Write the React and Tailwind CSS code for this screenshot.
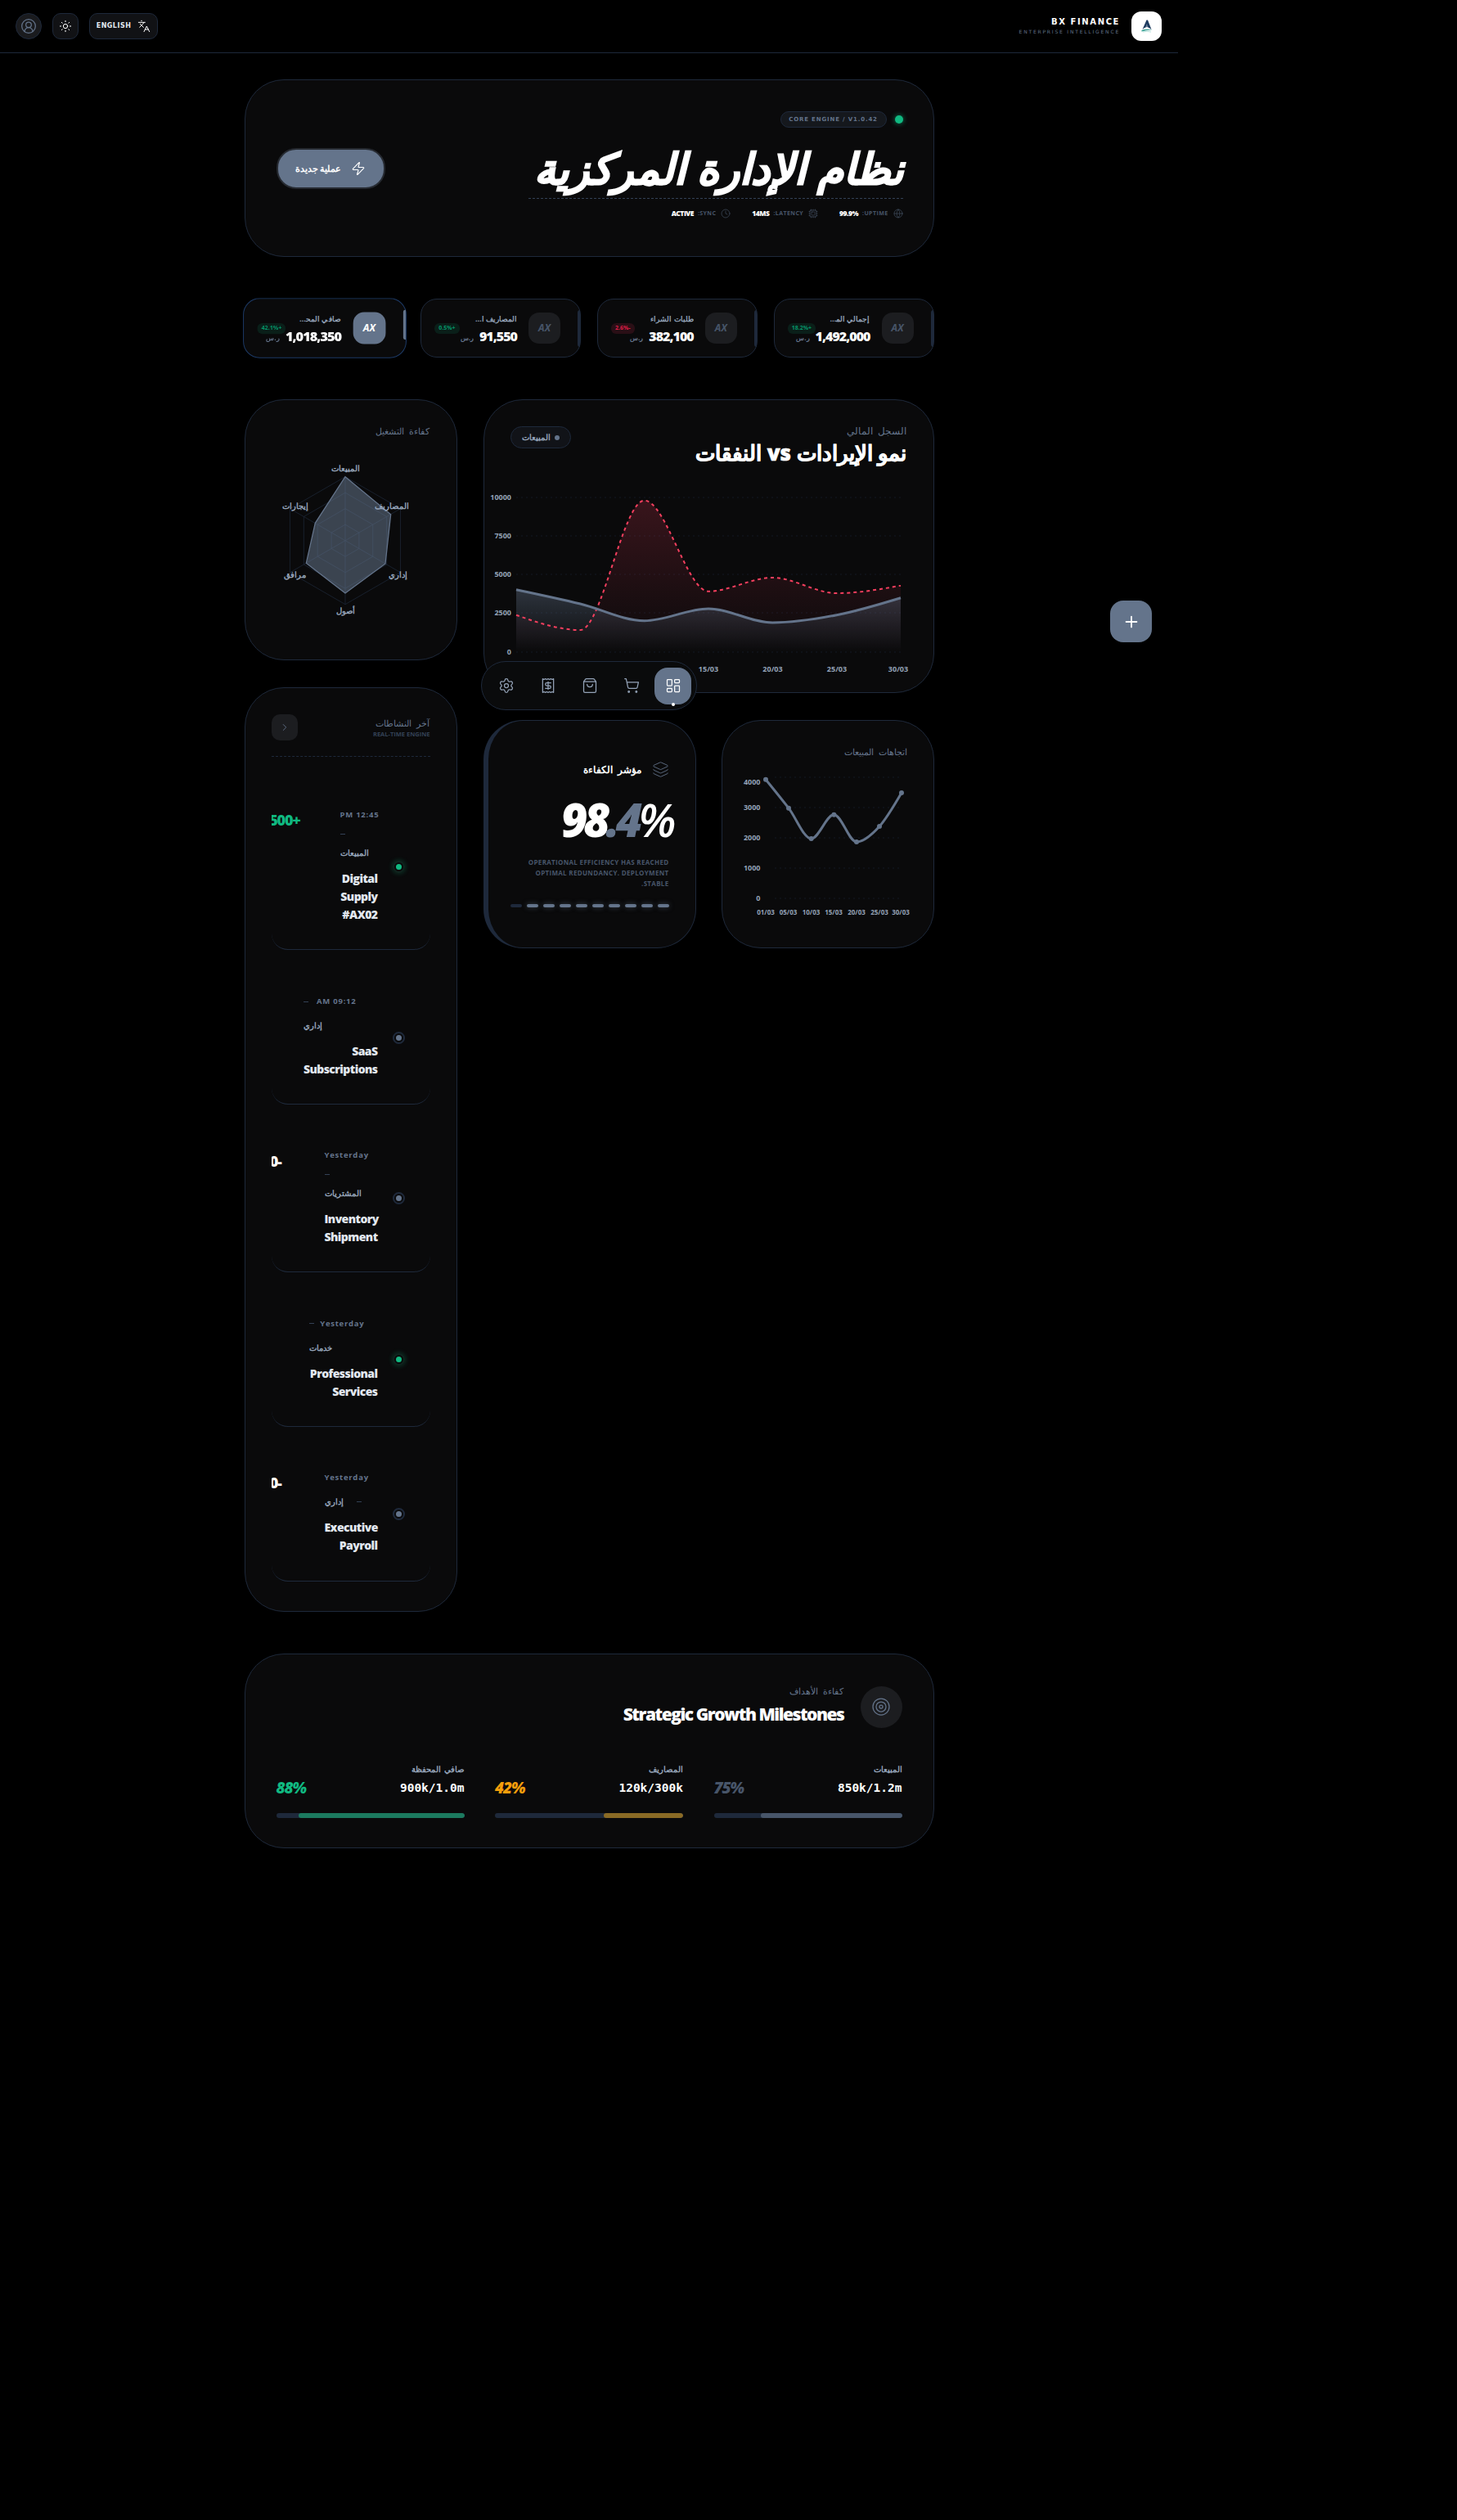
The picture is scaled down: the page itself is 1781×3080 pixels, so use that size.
import React from "react";
import { CircleUserRound, Sun, Languages, Zap, Globe, Cpu, Clock, ChevronRight, Layers, Target, Settings, Receipt, ShoppingBag, ShoppingCart, LayoutDashboard, Plus } from "lucide-react";

function mono(pts) {
  const sign = (v) => (v < 0 ? -1 : 1);
  const n = pts.length;
  const t = new Array(n).fill(0);
  for (let i = 1; i < n - 1; i++) {
    const [x0, y0] = pts[i - 1], [x1, y1] = pts[i], [x2, y2] = pts[i + 1];
    const h0 = x1 - x0, h1 = x2 - x1, s0 = (y1 - y0) / h0, s1 = (y2 - y1) / h1;
    const p = (s0 * h1 + s1 * h0) / (h0 + h1);
    t[i] = (sign(s0) + sign(s1)) * Math.min(Math.abs(s0), Math.abs(s1), 0.5 * Math.abs(p)) || 0;
  }
  t[0] = (3 * (pts[1][1] - pts[0][1]) / (pts[1][0] - pts[0][0]) - t[1]) / 2;
  t[n - 1] = (3 * (pts[n - 1][1] - pts[n - 2][1]) / (pts[n - 1][0] - pts[n - 2][0]) - t[n - 2]) / 2;
  let d = `M${pts[0][0]},${pts[0][1]}`;
  for (let i = 0; i < n - 1; i++) {
    const [x0, y0] = pts[i], [x1, y1] = pts[i + 1];
    const dx = (x1 - x0) / 3;
    d += `C${x0 + dx},${y0 + dx * t[i]},${x1 - dx},${y1 - dx * t[i + 1]},${x1},${y1}`;
  }
  return d;
}

const KPIS = [
  { l: "إجمالي المبيعات", v: "1,492,000", p: "+18.2%", red: false },
  { l: "طلبات الشراء", v: "382,100", p: "-2.6%", red: true },
  { l: "المصاريف الجارية", v: "91,550", p: "+0.5%", red: false },
  { l: "صافي المحفظة", v: "1,018,350", p: "+42.1%", red: false, active: true },
];

function Kpi({ k }) {
  return (
    <div className={"relative flex h-[72px] flex-1 items-center rounded-[20px] border bg-[#0a0a0b] pr-[24px] " + (k.active ? "scale-[1.02] border-[#1d3a66]" : "border-[#1e293b]")}>
      <span className={"absolute top-[13px] right-0 w-[3px] rounded-l " + (k.active ? "h-[36px] bg-[#64748b]" : "h-[45px] bg-[#1e293b]")}></span>
      <div className={"flex h-[38px] w-[39px] shrink-0 items-center justify-center rounded-[13px] text-[12px] font-bold italic " + (k.active ? "bg-[#64748b] text-white" : "bg-[#1c1d20] text-[#475569]")}>AX</div>
      <div className="mr-[14px] flex flex-col">
        <span className={"truncate text-[9px] leading-[14px] font-bold text-[#94a3b8] " + (k.l === "طلبات الشراء" ? "w-[60px]" : "w-[52px]")}>{k.l}</span>
        <div className="mt-[5px] flex items-center gap-[7px]">
          <span className="text-[16px] leading-[18px] font-extrabold tracking-[-0.06em] whitespace-nowrap text-white">{k.v}</span>
          <span className="mt-[4px] text-[8px] leading-[10px] font-bold whitespace-nowrap text-[#64748b]">ر.س</span>
        </div>
      </div>
      <span className={"absolute top-[29px] left-[16px] flex h-[13px] items-center rounded-[6px] px-[5px] text-[7px] font-bold " + (k.red ? "bg-[#2a0f16] text-[#e11d48]" : "bg-[#0a1f19] text-[#059669]")}>{k.p}</span>
    </div>
  );
}

function Stat({ icon: Icon, label, value }) {
  return (
    <div className="flex items-center">
      <Icon size={12} strokeWidth={1.25} className="text-[#475569]" />
      <span className="mr-[6px] text-[7px] font-bold tracking-[0.06em] text-[#475569]">{label}:</span>
      <span className="mr-[5px] text-[8.5px] font-extrabold tracking-[-0.06em] text-white">{value}</span>
    </div>
  );
}

function Radar() {
  const cx = 421, cy = 660.7;
  const ang = [-90, -30, 30, 90, 150, 210].map((a) => (a * Math.PI) / 180);
  const hex = (r) => ang.map((a) => `${cx + r * Math.cos(a)},${cy + r * Math.sin(a)}`).join(" ");
  const labels = [
    ["المبيعات", 421, 576],
    ["المصاريف", 478, 622],
    ["إداري", 485, 706],
    ["أصول", 421, 750],
    ["مرافق", 359, 706],
    ["إيجارات", 360, 622],
  ];
  return (
    <svg viewBox="331 560 194 200" width="194" height="200" className="mt-[27px] block overflow-visible">
      {[19.5, 39, 58.5, 78].map((r) => (
        <polygon key={r} points={hex(r)} fill="none" stroke="#1e293b" strokeOpacity="0.7" />
      ))}
      {ang.map((a, i) => (
        <line key={i} x1={cx} y1={cy} x2={cx + 78 * Math.cos(a)} y2={cy + 78 * Math.sin(a)} stroke="#1e293b" strokeOpacity="0.7" />
      ))}
      <polygon points="421,582.7 476.7,628.7 470,689 421,725 373.3,688.3 384.3,639.3" fill="#64748b" fillOpacity="0.55" stroke="#64748b" strokeWidth="1.25" />
      {labels.map(([t, x, y]) => (
        <text key={t} x={x} y={y} textAnchor="middle" className="fill-[#94a3b8] text-[10px] font-semibold">{t}</text>
      ))}
    </svg>
  );
}

function MainChart() {
  const xs = [631, 709.3, 787.7, 866, 944.3, 1022.7, 1101];
  const blue = mono(xs.map((x, i) => [x, [720.7, 738, 758.7, 744, 761, 751.7, 730.7][i]]));
  const red = mono(xs.map((x, i) => [x, [751.7, 770, 611.7, 722.7, 706, 725, 715.7][i]]));
  const close = "L1101,797L631,797Z";
  return (
    <svg dir="ltr" viewBox="623 590 486 240" width="486" height="240" className="mt-[18px] block overflow-visible">
      <defs>
        <linearGradient id="mainRed" x1="0" y1="0" x2="0" y2="1">
          <stop offset="0" stopColor="#f43f5e" stopOpacity="0.2" />
          <stop offset="1" stopColor="#f43f5e" stopOpacity="0" />
        </linearGradient>
        <linearGradient id="mainBlue" x1="0" y1="0" x2="0" y2="1">
          <stop offset="0" stopColor="#64748b" stopOpacity="0.4" />
          <stop offset="1" stopColor="#64748b" stopOpacity="0" />
        </linearGradient>
      </defs>
      {[608, 655, 702, 749, 797].map((y) => (
        <line key={y} x1="631" x2="1101" y1={y} y2={y} stroke="#1e293b" strokeOpacity="0.5" strokeDasharray="2 4" />
      ))}
      <path d={red + close} fill="url(#mainRed)" />
      <path d={blue + close} fill="url(#mainBlue)" />
      <path d={red} fill="none" stroke="#f43f5e" strokeWidth="2" strokeDasharray="4 4" />
      <path d={blue} fill="none" stroke="#64748b" strokeWidth="3" />
      {[["10000", 611], ["7500", 658], ["5000", 705], ["2500", 752], ["0", 800]].map(([t, y]) => (
        <text key={t} x="625" y={y} className="fill-[#94a3b8] text-[9px] font-bold">{t}</text>
      ))}
      {[["01/03", 631], ["05/03", 709], ["10/03", 787], ["15/03", 866], ["20/03", 944.5], ["25/03", 1023], ["30/03", 1098]].map(([t, x]) => (
        <text key={t} x={x} y="821" textAnchor="middle" className="fill-[#94a3b8] text-[9px] font-bold">{t}</text>
      ))}
    </svg>
  );
}

function TrendChart() {
  const pts = [[935, 952.7], [963, 987.7], [990.7, 1025], [1018.4, 995.7], [1046, 1029], [1074, 1010], [1101, 969]];
  return (
    <svg dir="ltr" viewBox="915 930 194 195" width="194" height="195" className="mt-[5px] block overflow-visible">
      {[950, 987, 1024, 1061, 1098].map((y) => (
        <line key={y} x1="946" x2="1101" y1={y} y2={y} stroke="#1e293b" strokeOpacity="0.5" strokeDasharray="2 4" />
      ))}
      <path d={mono(pts)} fill="none" stroke="#64748b" strokeWidth="3" />
      {pts.map(([x, y]) => (
        <circle key={x} cx={x} cy={y} r="3" fill="#64748b" />
      ))}
      {[["4000", 959], ["3000", 990], ["2000", 1027], ["1000", 1064], ["0", 1101]].map(([t, y]) => (
        <text key={t} x="928.5" y={y} className="fill-[#94a3b8] text-[9px] font-bold">{t}</text>
      ))}
      {[["01/03", 935], ["05/03", 962.5], ["10/03", 990.5], ["15/03", 1018], ["20/03", 1046], ["25/03", 1074], ["30/03", 1100]].map(([t, x]) => (
        <text key={t} x={x} y="1118" textAnchor="middle" className="fill-[#94a3b8] text-[8px] font-bold">{t}</text>
      ))}
    </svg>
  );
}

const Dash = () => <span className="block h-[1px] w-[6px] bg-[#334155]"></span>;
const Time = ({ t }) => <span dir="ltr" className="block text-[9.5px] leading-[12px] font-bold tracking-[0.08em] whitespace-nowrap text-[#64748b]">{t}</span>;
const Lab = ({ t }) => <span className="block text-[10px] leading-[14px] font-bold whitespace-nowrap text-[#94a3b8]">{t}</span>;

const ROWS = [
  { cls: "mt-[33px] h-[203px]", w: "w-[46px]", green: true, title: ["Digital", "Supply", "#AX02"],
    amount: "+12,500", amtCls: "text-[#10b981] mr-[49px]",
    meta: (<><Time t="PM 12:45" /><div className="mt-[17px] flex h-[2px] items-center"><Dash /></div><div className="mt-[14px]"><Lab t="المبيعات" /></div></>) },
  { cls: "mt-[26px] h-[163px]", w: "w-[91px]", title: ["SaaS", "Subscriptions"],
    meta: (<><div className="flex h-[12px] w-[65px] items-center justify-between"><Dash /><Time t="AM 09:12" /></div><div className="mt-[16px]"><Lab t="إداري" /></div></>) },
  { cls: "mt-[25px] h-[180px]", w: "w-[65px]", title: ["Inventory", "Shipment"],
    amount: "-45,000", amtCls: "text-white mr-[53px]",
    meta: (<><Time t="Yesterday" /><div className="mt-[16px] flex h-[2px] items-center"><Dash /></div><div className="mt-[15px]"><Lab t="المشتريات" /></div></>) },
  { cls: "mt-[25px] h-[164px]", w: "w-[84px]", title: ["Professional", "Services"], green: true,
    meta: (<><div className="flex h-[12px] w-[68px] items-center justify-between"><Dash /><Time t="Yesterday" /></div><div className="mt-[16px]"><Lab t="خدمات" /></div></>) },
  { cls: "mt-[24px] h-[165px]", w: "w-[65px]", title: ["Executive", "Payroll"],
    amount: "-80,000", amtCls: "text-white mr-[53px]",
    meta: (<><Time t="Yesterday" /><div className="mt-[16px] flex h-[14px] w-[45px] items-center justify-between"><Lab t="إداري" /><Dash /></div></>) },
];

function Row({ r }) {
  return (
    <div className={"flex items-center overflow-hidden rounded-[20px] border-b border-[#1e293b] pr-[31px] " + r.cls}>
      <span className={"flex h-[15px] w-[15px] shrink-0 items-center justify-center rounded-full border-2 " + (r.green ? "border-[#10251f] shadow-[0_0_6px_#10b98155]" : "border-[#1e293b]")}>
        <span className={"h-[7px] w-[7px] shrink-0 rounded-full " + (r.green ? "bg-[#10b981]" : "bg-[#64748b]")}></span>
      </span>
      <div className={"mr-[18px] flex shrink-0 flex-col " + r.w}>
        <div dir="ltr" className="flex flex-col items-start">{r.meta}</div>
        <div className="mt-[14px] text-[14px] leading-[22px] font-extrabold tracking-[-0.04em] whitespace-nowrap text-[#e2e8f0]">
          {r.title.map((t) => (<div key={t} dir="ltr" className="text-right">{t}</div>))}
        </div>
      </div>
      {r.amount && (
        <span className={"mt-[32px] shrink-0 self-start text-[18px] leading-[24px] font-extrabold tracking-[-0.07em] whitespace-nowrap " + r.amtCls}>{r.amount}</span>
      )}
    </div>
  );
}

function Goal({ label, value, pct, pctCls, fill, w }) {
  return (
    <div className="flex w-[230px] flex-col">
      <span className="text-[10px] leading-[14px] font-bold text-[#94a3b8] [word-spacing:0.2em]">{label}</span>
      <div className="mt-[6px] flex items-center justify-between">
        <span className="font-['DejaVu_Sans_Mono',monospace] text-[14.5px] leading-[20px] font-bold whitespace-nowrap text-white">{value}</span>
        <span className={"text-[19px] leading-[20px] font-extrabold italic tracking-[-0.06em] " + pctCls}>{pct}</span>
      </div>
      <div className="mt-[21px] h-[6px] w-full overflow-hidden rounded-full bg-[#1e293b]">
        <div className={"h-full rounded-full " + fill + " " + w}></div>
      </div>
    </div>
  );
}

const CARD = "rounded-[48px] border border-[#1e293b] bg-[#0a0a0b]";

export default function App() {
  return (
    <div className="min-h-[3080px] w-full bg-black">
      <div dir="rtl" className="relative w-[1440px] font-['Open_Sans',sans-serif] text-white">
        <header className="flex h-[65px] items-center justify-between border-b border-[#1e293b] pr-[20px] pl-[19px]">
          <div className="flex items-center gap-[14px]">
            <div className="flex h-[36px] w-[37px] items-center justify-center rounded-[12px] bg-white">
              <svg viewBox="0 0 14 16" width="14" height="16">
                <path d="M6.5 0.5 L8 0.5 L12.5 12 L9.5 10 L7 9 L4 10 L1.5 12 Z" fill="#1e3a5f" />
                <path d="M6.8 5 L8.6 10 L5.2 10 Z" fill="#fff" fillOpacity="0.35" />
                <path d="M0.5 13 Q7 10.5 13.5 13 Q7 12.4 0.5 14.4 Z" fill="#2f9c8f" />
                <path d="M2 15 Q7 13.6 12 15" fill="none" stroke="#9fd6cf" strokeWidth="0.8" />
              </svg>
            </div>
            <div className="flex flex-col items-start">
              <span dir="ltr" className="font-['DejaVu_Sans',sans-serif] text-[10px] leading-[13px] font-bold tracking-[0.16em] whitespace-nowrap">BX FINANCE</span>
              <span dir="ltr" className="font-['DejaVu_Sans',sans-serif] text-[6px] leading-[11px] tracking-[0.3em] whitespace-nowrap text-[#64748b]">ENTERPRISE INTELLIGENCE</span>
            </div>
          </div>
          <div className="flex items-center gap-[13px]">
            <button className="flex h-[32px] w-[84px] items-center justify-center gap-[8px] rounded-[10px] border border-[#1e293b] bg-[#111215]">
              <Languages size={16} strokeWidth={1.5} className="text-white" />
              <span className="font-['DejaVu_Sans',sans-serif] text-[8px] font-bold tracking-[0.06em] text-[#e2e8f0]">ENGLISH</span>
            </button>
            <button className="flex h-[32px] w-[32px] items-center justify-center rounded-[10px] border border-[#1e293b] bg-[#111215]">
              <Sun size={16} strokeWidth={1.5} className="text-white" />
            </button>
            <button className="flex h-[32px] w-[32px] items-center justify-center rounded-full border border-[#1e293b] bg-[#1a1b1e]">
              <CircleUserRound size={20} strokeWidth={1.5} className="text-[#64748b]" />
            </button>
          </div>
        </header>

        <main className="mx-auto w-[843px] pt-[32px]">
          <section className={"flex h-[217px] justify-between pt-[38px] pr-[37px] pl-[38px] " + CARD}>
            <div className="flex w-[458px] flex-col">
              <div className="flex items-center gap-[10px]">
                <span className="h-[10px] w-[10px] rounded-full bg-[#10b981] shadow-[0_0_6px_#10b981aa]"></span>
                <span className="flex h-[20px] w-[130px] items-center justify-center rounded-[10px] border border-[#1e293b] bg-[#15181d] font-['DejaVu_Sans',sans-serif] text-[7px] font-bold tracking-[0.12em] whitespace-nowrap text-[#64748b]">
                  <span dir="ltr">CORE ENGINE / V1.0.42</span>
                </span>
              </div>
              <h1 className="mt-[16px] flex h-[71px] items-center border-b border-dashed border-[#334155] pb-[4px] text-[52px] leading-[64px] font-black whitespace-nowrap italic [-webkit-text-stroke:1.6px_white]">نظام الإدارة المركزية</h1>
              <div className="mt-[12px] flex items-center gap-[26px]">
                <Stat icon={Globe} label="UPTIME" value="99.9%" />
                <Stat icon={Cpu} label="LATENCY" value="14MS" />
                <Stat icon={Clock} label="SYNC" value="ACTIVE" />
              </div>
            </div>
            <button className="mt-[45px] flex h-[50px] w-[133px] items-center justify-center gap-[12px] rounded-[24px] border-2 border-[#262a31] bg-[#64748b] text-[11px] font-bold">
              <Zap size={18} strokeWidth={1.5} />
              <span>عملية جديدة</span>
            </button>
          </section>

          <section className="mt-[51px] flex gap-[20px]">
            {KPIS.map((k) => (<Kpi key={k.v} k={k} />))}
          </section>

          <section className="mt-[51px] flex justify-between">
            <div className="flex w-[551px] flex-col">
              <div className={"h-[359px] p-[32px] " + CARD}>
                <div className="flex items-start justify-between">
                  <div>
                    <div className="text-[12px] leading-[12px] font-medium text-[#64748b] [word-spacing:0.3em]">السجل المالي</div>
                    <div className="mt-[2px] text-[26px] leading-[37px] font-extrabold whitespace-nowrap [-webkit-text-stroke:0.6px_white]">نمو الإيرادات vs النفقات</div>
                  </div>
                  <span className="flex h-[27px] w-[74px] items-center justify-center gap-[5px] rounded-full border border-[#1e293b] bg-[#111318] text-[10px] font-bold text-[#94a3b8]">
                    <span className="h-[6px] w-[6px] rounded-full bg-[#64748b]"></span>
                    المبيعات
                  </span>
                </div>
                <MainChart />
              </div>
              <div className="mt-[33px] flex justify-between">
                <div className={"h-[279px] w-[260px] pt-[32px] pr-[31px] " + CARD}>
                  <div className="text-[11px] leading-[12px] text-[#64748b] [word-spacing:0.3em]">اتجاهات المبيعات</div>
                  <TrendChart />
                </div>
                <div className={"h-[279px] w-[260px] border-l-[6px] pt-[49px] pr-[32px] pl-[27px] " + CARD}>
                  <div className="flex items-center gap-[12px]">
                    <Layers size={21} strokeWidth={1} className="text-[#64748b]" />
                    <span className="text-[12px] font-extrabold [word-spacing:0.3em]">مؤشر الكفاءة</span>
                  </div>
                  <div dir="ltr" className="-mr-[4px] mt-[18px] text-right text-[56px] leading-[64px] font-extrabold italic tracking-[-0.09em]">
                    98<span className="text-[#64748b]">.4</span><span className="font-semibold">%</span>
                  </div>
                  <p className="mt-[14px] w-[185px] text-[8px] leading-[13px] font-bold tracking-[0.04em] text-[#475569] uppercase">Operational efficiency has reached optimal redundancy. Deployment stable.</p>
                  <div className="mt-[19px] flex gap-[6px]">
                    {[1, 1, 1, 1, 1, 1, 1, 1, 1, 0].map((on, i) => (
                      <span key={i} className={"h-[4px] flex-1 rounded-full " + (on ? "bg-[#64748b] shadow-[0_0_6px_#64748b88]" : "bg-[#1e293b]")}></span>
                    ))}
                  </div>
                </div>
              </div>
            </div>

            <div className="flex w-[260px] flex-col">
              <div className={"h-[319px] pt-[32px] pr-[32px] pl-[33px] " + CARD}>
                <div className="text-[11px] leading-[12px] text-[#64748b] [word-spacing:0.3em]">كفاءة التشغيل</div>
                <Radar />
              </div>
              <div className={"mt-[33px] h-[1130px] px-[32px] pt-[32px] " + CARD}>
                <div className="flex items-center justify-between border-b border-dashed border-[#1e293b] pb-[19px]">
                  <div>
                    <div className="text-[11px] leading-[16px] font-medium text-[#64748b] [word-spacing:0.3em]">آخر النشاطات</div>
                    <div className="text-[7.5px] leading-[11px] font-bold whitespace-nowrap text-[#334155]">REAL-TIME ENGINE</div>
                  </div>
                  <button className="flex h-[32px] w-[32px] items-center justify-center rounded-[10px] bg-[#1c1d20]">
                    <ChevronRight size={14} strokeWidth={1.5} className="text-[#64748b]" />
                  </button>
                </div>
                {ROWS.map((r) => (<Row key={r.title[0]} r={r} />))}
              </div>
            </div>
          </section>

          <section className={"mt-[51px] h-[238px] px-[38px] pt-[38px] " + CARD}>
            <div className="flex items-center gap-[20px]">
              <div className="flex h-[51px] w-[51px] items-center justify-center rounded-full bg-[#1c1d20]">
                <Target size={24} strokeWidth={1.25} className="text-[#64748b]" />
              </div>
              <div>
                <div className="text-[11px] leading-[14px] text-[#64748b] [word-spacing:0.3em]">كفاءة الأهداف</div>
                <div className="mt-[4px] text-[21px] leading-[34px] font-extrabold tracking-[-0.07em] whitespace-nowrap" dir="ltr">Strategic Growth Milestones</div>
              </div>
            </div>
            <div className="mt-[43px] flex justify-between">
              <Goal label="المبيعات" value="850k/1.2m" pct="75%" pctCls="text-[#475569]" fill="bg-[#475569]" w="w-[75%]" />
              <Goal label="المصاريف" value="120k/300k" pct="42%" pctCls="text-[#f59e0b]" fill="bg-[#8a6a25]" w="w-[42%]" />
              <Goal label="صافي المحفظة" value="900k/1.0m" pct="88%" pctCls="text-[#10b981]" fill="bg-[#1c7a5f]" w="w-[88%]" />
            </div>
          </section>
        </main>

        <nav className="absolute top-[808px] left-[588px] flex h-[60px] w-[264px] items-center gap-[6px] rounded-[30px] border border-[#1e293b] bg-[#0a0b0c] pr-[6px]">
          <button className="relative flex h-[45px] w-[45px] items-center justify-center rounded-[16px] bg-[#64748b]">
            <LayoutDashboard size={20} strokeWidth={1.5} className="text-white" />
            <span className="absolute -bottom-[2px] h-[4px] w-[4px] rounded-full bg-white"></span>
          </button>
          {[ShoppingCart, ShoppingBag, Receipt, Settings].map((Ic, i) => (
            <button key={i} className="flex h-[45px] w-[45px] items-center justify-center">
              <Ic size={20} strokeWidth={1.5} className="text-[#94a3b8]" />
            </button>
          ))}
        </nav>

        <button className="absolute top-[734px] left-[1357px] flex h-[51px] w-[51px] items-center justify-center rounded-[16px] bg-[#64748b]">
          <Plus size={22} strokeWidth={2} className="text-white" />
        </button>
      </div>
    </div>
  );
}
